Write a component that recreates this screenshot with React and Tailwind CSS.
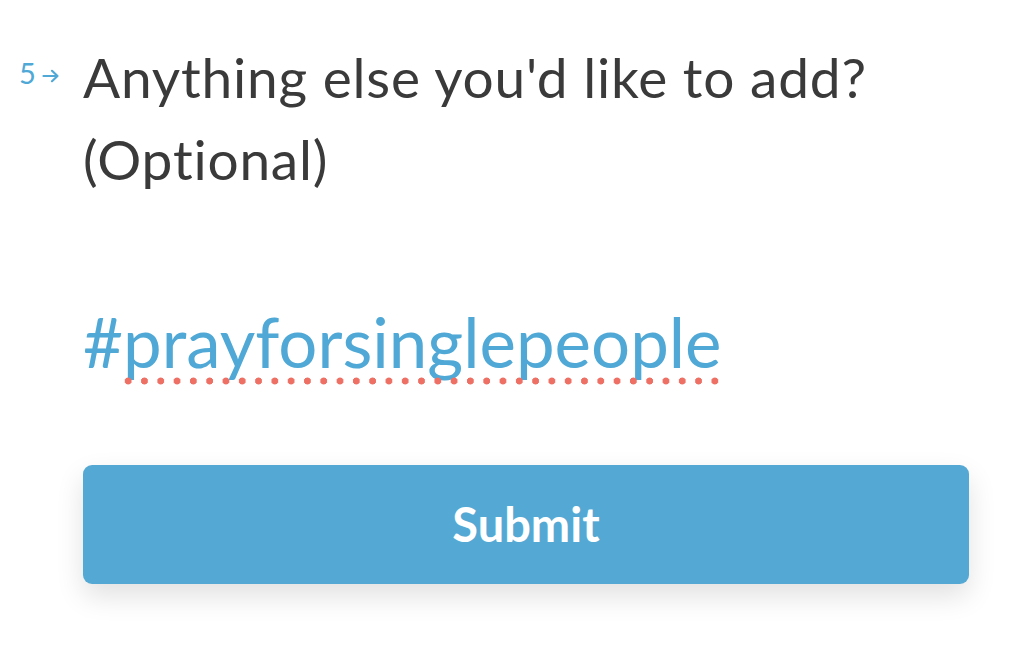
import React from "react";

export default function App() {
  return (
    <div
      className="h-[654px] w-[1024px] overflow-hidden bg-white"
      style={{ fontFamily: "Lato, 'Noto Sans', sans-serif" }}
    >
      <div className="flex pt-[36px]">
        {/* Question number */}
        <div className="flex w-[83px] shrink-0 items-start gap-[6px] pl-[19px] pt-[22px] self-start text-[#4fa8d5]">
          <span className="text-[29px] leading-none">5</span>
          <svg className="mt-[11px]" width="18" height="14" viewBox="0 0 18 14" fill="none" stroke="currentColor" strokeWidth="2.2" strokeLinecap="round" strokeLinejoin="round">
            <path d="M1.5 7h14M10 1.8L15.5 7 10 12.2" />
          </svg>
        </div>

        <div className="flex-1 pr-[55px]">
          <h1 className="text-[55px] font-normal leading-[82px] text-[#3a3a3a] tracking-[0.8px]">
            Anything else you'd like to add?
            <br />
            (Optional)
          </h1>

          {/* Answer */}
          <div className="mt-[102px] text-[69px] leading-[80px] text-[#4fa8d5]">
            #
            <span className="relative">
              prayforsinglepeople
              <span className="absolute left-[-3px] right-[0px] top-[77px] h-[8px] bg-[radial-gradient(circle,#ee6f63_3.2px,transparent_3.8px)] bg-[length:16.3px_8px]" />
            </span>
          </div>

          <button
            type="button"
            className="mt-[83px] flex h-[119px] w-full items-center justify-center rounded-[9px] bg-[#54a9d4] text-[47px] font-bold text-white shadow-[0_12px_28px_rgba(0,0,0,0.12)]"
          >
            Submit
          </button>
        </div>
      </div>
    </div>
  );
}
